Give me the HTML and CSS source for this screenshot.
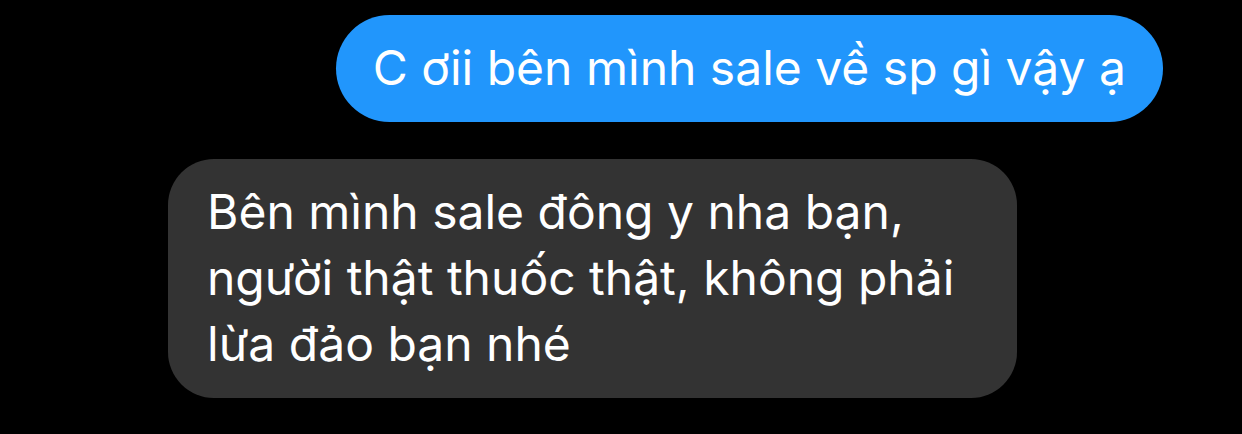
FILE: index.html
```html
<!DOCTYPE html>
<html lang="vi">
<head>
<meta charset="utf-8">
<link rel="stylesheet" href="styles.css">
</head>
<body>
<div class="chat">
  <div class="row row-out">
    <div class="bubble bubble-out">C ơii bên mình sale về sp gì vậy ạ</div>
  </div>
  <div class="row row-in">
    <div class="bubble bubble-in">Bên mình sale đông y nha bạn,<br>người thật thuốc thật, không phải<br>lừa đảo bạn nhé</div>
  </div>
</div>
</body>
</html>
```
FILE: styles.css
```css
html, body {
  margin: 0;
  padding: 0;
  background: #000;
}
.chat {
  width: 1242px;
  height: 434px;
  display: flex;
  flex-direction: column;
  gap: 37px;
  padding-top: 15px;
  box-sizing: border-box;
  font-family: Inter, "Liberation Sans", Arial, sans-serif;
  color: #fff;
}
.row {
  display: flex;
}
.row-out {
  justify-content: flex-end;
  padding-right: 79px;
}
.row-in {
  justify-content: flex-start;
  padding-left: 168px;
}
.bubble {
  font-size: 48px;
  line-height: 66px;
  box-sizing: border-box;
}
.bubble-out {
  background: #2196fc;
  border-radius: 54px;
  height: 107px;
  padding: 20px 37px 21px 37px;
  white-space: nowrap;
}
.bubble-in {
  background: #333333;
  border-radius: 46px;
  width: 849px;
  height: 239px;
  padding: 20px 20px 21px 39px;
}
```
